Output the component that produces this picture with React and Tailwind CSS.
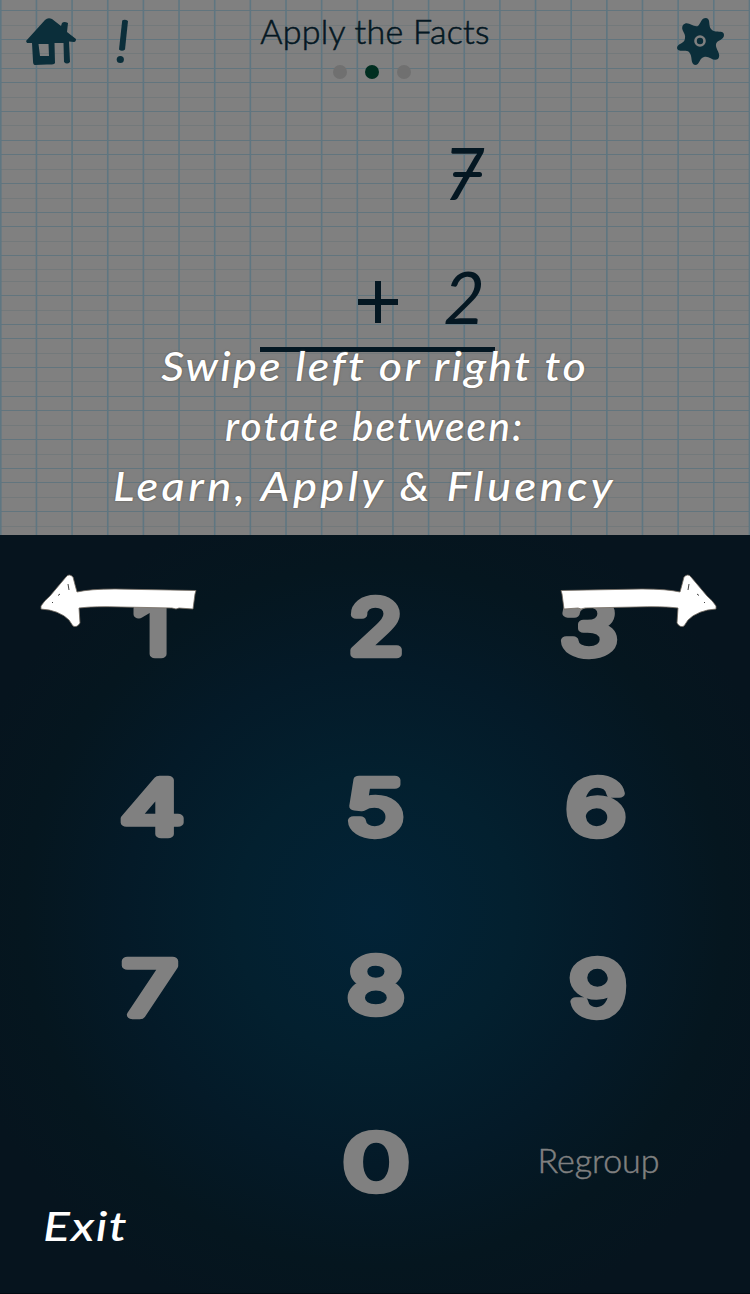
import React from "react";

const verticals = Array.from({ length: 22 }, (_, i) => 0.8 + i * 35.65);
const strong = [10.5, 39.5, 68.5, 82.5, 111.5, 140.5, 154.5, 183.5, 212.5, 226.5, 255.5, 295.5, 324.5, 338.5, 367.5, 396.5, 410.5, 439.5, 468.5, 482.5, 511.5];
const faint = [25.5, 53.5, 97.5, 125.5, 169.5, 198.5, 241.5, 269.5, 281.5, 310.5, 353.5, 381.5, 425.5, 454.5, 497.5, 526.5];

// Horizontal nudge, vertical nudge and stretch of every keypad digit.
const keys = [
  { digit: "1", dx: 0, dy: 0, sx: 1.25 },
  { digit: "2", dx: 0, dy: 0, sx: 1.22 },
  { digit: "3", dx: -10, dy: 0, sx: 1.29 },
  { digit: "4", dx: 0, dy: 0, sx: 1.38 },
  { digit: "5", dx: -1, dy: 0, sx: 1.33 },
  { digit: "6", dx: -3, dy: 0, sx: 1.36 },
  { digit: "7", dx: -2, dy: 1, sx: 1.34 },
  { digit: "8", dx: 0, dy: -2, sx: 1.28 },
  { digit: "9", dx: -1, dy: 1, sx: 1.3 },
];

function GraphPaper() {
  return (
    <svg className="absolute inset-0" width="750" height="535" aria-hidden="true">
      {faint.map((y) => <path key={y} d={`M0 ${y}H750`} stroke="#73797b" />)}
      {strong.map((y) => <path key={y} d={`M0 ${y}H750`} stroke="#62757e" />)}
      {verticals.map((x) => <path key={x} d={`M${x} 0V535`} stroke="#5f7681" strokeWidth="1.6" />)}
    </svg>
  );
}

function HomeIcon() {
  return (
    <svg width="50" height="48" viewBox="0 0 50 48" fill="#0b2e3a" fillRule="evenodd" aria-label="Home">
      <path d="M0 23 19 2Q22-1 26 1L35 8 36 5Q38 3 42 5L41 14 50 21Q50 24 48 24L43 23.500 44 44Q41 47 38 44L37.500 25H28.500L29 45Q28 47 21 46.500L9 47Q7 47 7 43L6 25 1 25ZM12.500 26 14 38H23L22.500 26Z" />
    </svg>
  );
}

function ExclaimIcon() {
  return (
    <svg width="13" height="46" viewBox="0 0 13 46" aria-label="Hint">
      <path d="M6.200 2.500Q9 1 12 3L9 31.500Q6 34 3 31.500Z" fill="#0b2e3a" />
      <circle cx="4.300" cy="41.500" r="3.600" fill="#0b2e3a" />
    </svg>
  );
}

function GearIcon() {
  return (
    <svg width="47" height="47" viewBox="0 0 47 47" aria-label="Settings">
      <path fill="#0b2e3a" d="M21 8C24 5 24 0 29 0C34 1 31 7 34 11C38 16 47 11 47 17C47 22 40 22 39 26C38 31 45 36 41 41C36 44 32 37 27 39C22 40 23 47 18 47C13 46 16 38 12 34C9 31 1 35 0 30C0 25 8 26 8 20C9 15 3 12 6 7C11 2 16 10 21 8Z" />
      <circle cx="23" cy="23" r="4.500" fill="none" stroke="#808080" strokeWidth="2.600" />
    </svg>
  );
}

function Arrow({ right }) {
  return (
    <svg width="157" height="55" viewBox="0 0 157 55" className={right ? "-scale-x-100" : ""} aria-hidden="true">
      <path fill="#fff" stroke="#736b61" strokeWidth="0.8" strokeLinejoin="round" d="M1 32Q4 27 10 22L26 3Q29-1 33 3Q35 11 37 18Q50 15 75 15L156 16.500 155 20 153 35 139 34 136 35 132 34 82 33Q55 32 39 34L40 49Q37 54 33 52L29 46Q19 36 1 35Z" />
      <path d="M28 10 29 16M20 20 18 21.500M12 28 13 29" stroke="#444" strokeWidth="1" />
    </svg>
  );
}

function Digit({ digit, dx, dy, sx }) {
  return (
    <svg width="120" height="130" viewBox="-60 -65 120 130" className="overflow-visible" aria-label={digit}>
      <text
        transform={`translate(${dx} ${dy}) scale(${sx} 1)`}
        y="27.500"
        textAnchor="middle"
        fill="#808080"
        stroke="#808080"
        strokeWidth="8.500"
        strokeLinejoin="round"
        className="font-['Inter',sans-serif] text-[74px] font-light"
      >
        {digit}
      </text>
    </svg>
  );
}

function PlusSign() {
  return <svg width="40" height="42" aria-label="plus"><path d="M0 21H40M20 0V42" stroke="#041722" strokeWidth="6" /></svg>;
}

export default function App() {
  return (
    <main className="relative flex h-[1294px] w-[750px] flex-col overflow-hidden bg-[#06141e] font-['Lato',sans-serif]">
      <section className="relative h-[535px] shrink-0 bg-[#808080] text-[#041722]">
        <GraphPaper />
        <header className="relative flex h-[90px] items-start justify-between px-[26px] pt-[18px]">
          <div className="flex w-[150px] gap-10">
            <HomeIcon />
            <ExclaimIcon />
          </div>
          <div className="-mt-[7px] flex flex-col items-center">
            <h1 className="whitespace-nowrap text-[34px] font-light leading-[40px] tracking-[0.3px] [-webkit-text-stroke:0.6px_#041722]">Apply the Facts</h1>
            <div className="mt-[14px] flex gap-[18px] pr-[6px]">
              <span className="size-[14px] rounded-full bg-[#707070]" />
              <span className="size-[14px] rounded-full bg-[#002e20]" />
              <span className="size-[14px] rounded-full bg-[#707070]" />
            </div>
          </div>
          <div className="flex w-[150px] justify-end"><GearIcon /></div>
        </header>
        <div className="relative ml-[260px] flex h-[262px] w-[235px] flex-col items-end border-b-[5px] border-[#041722] pr-[10px] pt-[42px] text-[72px] leading-[80px]">
          <span className="relative italic">
            7
            <span className="absolute left-[10px] top-[40px] h-[5px] w-[29px] rounded-full bg-[#041722]" />
          </span>
          <div className="mt-[44px] flex items-center gap-[45px]">
            <div className="pt-[12px]"><PlusSign /></div>
            <span className="italic">2</span>
          </div>
        </div>
      </section>

      <section className="h-[759px] border-b border-[#020a12] bg-[radial-gradient(circle_at_375px_380px,#022337_0px,#03202f_140px,#041a28_250px,#05161f_350px,#06141e_430px)] text-[#808080]">
        <div className="grid h-full grid-cols-[225px_223px_223px] content-start pl-[39px] pt-[1px]">
          {keys.map((key) => (
            <button key={key.digit} className="flex h-[180px] items-center justify-center"><Digit {...key} /></button>
          ))}
          <button className="col-start-2 flex h-[180px] items-center justify-center"><Digit digit="0" dx={0} dy={-5} sx={1.46} /></button>
          <button className="flex h-[180px] items-center justify-center pb-[13px] text-[34px] font-light [-webkit-text-stroke:0.5px_#808080]">Regroup</button>
        </div>
      </section>

      <div className="absolute inset-0 font-medium italic text-white [text-shadow:0_0_1px_#635d55,0_0_2px_#635d55]">
        <div className="flex flex-col items-center pt-[336px] text-[40px] leading-[60px]">
          <p className="scale-x-[1.12] whitespace-nowrap tracking-[2px]">Swipe left or right to</p>
          <p className="scale-x-[1.02] whitespace-nowrap tracking-[2px]">rotate between:</p>
          <p className="mr-[22px] scale-x-[1.13] whitespace-nowrap tracking-[3px]">Learn, Apply &amp; Fluency</p>
        </div>
        <div className="mt-[58px] flex justify-between pl-10 pr-[33px]">
          <Arrow />
          <Arrow right />
        </div>
        <button className="ml-[43px] mt-[573px] block origin-left scale-x-[1.25] text-[40px] italic leading-[48px] tracking-[1px]">Exit</button>
      </div>
    </main>
  );
}
